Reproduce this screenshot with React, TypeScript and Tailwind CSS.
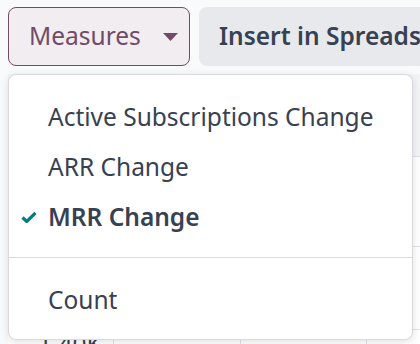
const font = { fontFamily: '"Noto Sans", "Open Sans", sans-serif' }

const Caret = () => (
  <svg width="15" height="8" viewBox="0 0 15 8" className="ml-[22px]">
    <path d="M0 0 L15 0 L7.5 8 Z" fill="#714b67" />
  </svg>
)

const Check = () => (
  <svg width="16" height="12" viewBox="0 0 16 12" className="absolute left-[12px] top-1/2 -translate-y-1/2">
    <path d="M1.5 6.5 L5.8 10.5 L14.5 1.8" fill="none" stroke="#017e84" strokeWidth="3.2" strokeLinejoin="miter" />
  </svg>
)

const Item = ({ label, checked }: { label: string; checked?: boolean }) => (
  <div className={`relative h-[50px] flex items-center pl-[39px] text-[24.5px] text-[#374151] ${checked ? 'font-semibold' : ''}`}>
    {checked && <Check />}
    {label}
  </div>
)

export default function App() {
  return (
    <div className="relative w-[420px] h-[344px] overflow-hidden bg-[#f9fafb]" style={font}>
      <div className="flex gap-[9px] pt-[7px] pl-[8px]">
        <button className="h-[59px] w-[182px] shrink-0 flex items-center pl-[20px] rounded-[8px] border border-[#714b67] bg-[#f2edf1] text-[24.5px] text-[#714b67]">
          Measures
          <Caret />
        </button>
        <button className="h-[59px] pl-[20px] pr-5 rounded-[8px] bg-[#e7e9ed] text-[24.5px] font-semibold text-[#374151] whitespace-nowrap">
          Insert in Spreadsheet
        </button>
      </div>

      {/* table behind the menu */}
      <div className="mt-[8px] ml-[8px] bg-white">
        <div className="h-[83px] bg-[#f3f4f6] border-b border-[#dee2e6]" />
        <div className="h-[90px] border-b border-[#dee2e6]" />
        <div className="h-[83px] border-b border-[#dee2e6]" />
        <div className="grid grid-cols-[105px_127px_126px_1fr] h-[60px]">
          <div className="pt-[2px] pl-[30px] text-[24.5px] leading-none text-[#374151]">1.40K</div>
          <div className="border-l border-[#dee2e6]" />
          <div className="border-l border-[#dee2e6]" />
          <div className="border-l border-[#dee2e6]" />
        </div>
      </div>

      <div className="absolute left-[8px] top-[74px] w-[405px] h-[266px] rounded-[8px] border border-[#d8dadd] bg-white shadow-[0_2px_8px_rgba(0,0,0,0.12)] pt-[17px]">
        <Item label="Active Subscriptions Change" />
        <Item label="ARR Change" />
        <Item label="MRR Change" checked />
        <div className="mt-[15px] mb-[17px] border-t border-[#d8dadd]" />
        <Item label="Count" />
      </div>
    </div>
  )
}
